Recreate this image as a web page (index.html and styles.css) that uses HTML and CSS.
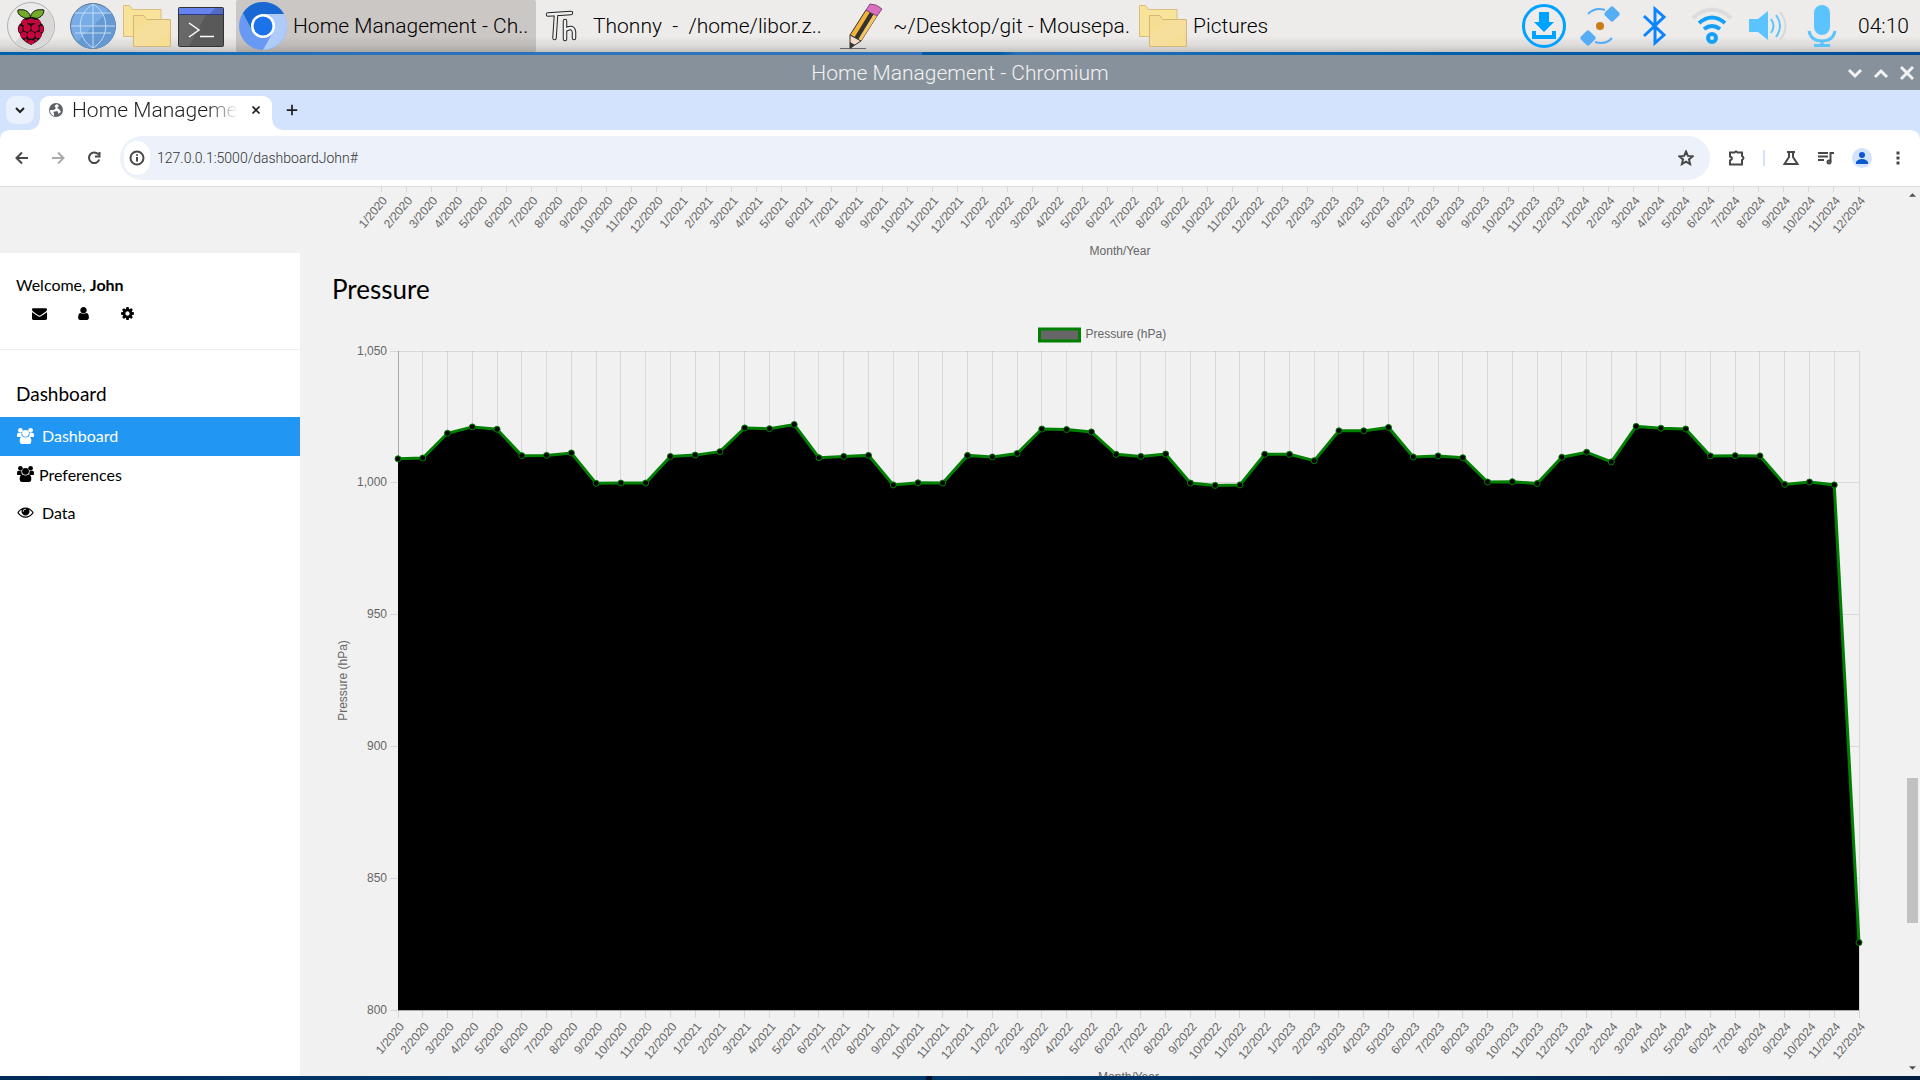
FILE: index.html
```html
<!DOCTYPE html>
<html lang="en">
<head>
<meta charset="utf-8">
<title>Home Management</title>
<link rel="stylesheet" href="styles.css">
</head>
<body>
<svg class="defs" aria-hidden="true">
  <symbol id="folder" viewBox="0 0 48 48">
    <path d="M.5 34.500V3.500h6l3 4h28.500v27z" fill="#f8e39b" stroke="#d9bd80"/>
    <path d="M10.500 44.500V13.500h10l3 4h24v27z" fill="#f6dd94" stroke="#d4b679"/>
    <path d="M11 44V32l22-14h14v12L24 44z" fill="#fff" opacity=".08"/>
  </symbol>
  <symbol id="users" viewBox="0 0 16 15">
    <circle cx="3.200" cy="2.200" r="2.200"/><circle cx="12.800" cy="2.200" r="2.200"/><circle cx="8" cy="5" r="3.200"/>
    <path d="M0 8V6.500Q0 4.500 1.500 4.500L4.200 5Q4 7 5 8.500H1.500Q0 8.500 0 8zM16 8V6.500Q16 4.500 14.500 4.500L11.800 5Q12 7 11 8.500h3.500Q16 8.500 16 8zM2.500 12.500Q2.500 8 5.300 8Q8 10 10.700 8Q13.500 8 13.500 12.500Q13.500 15 11.500 15h-7Q2.500 15 2.500 12.500z"/>
  </symbol>
</svg>
<div class="desktop">
  <header class="taskbar">
    <nav class="launchers" aria-label="Launchers">
      <button class="start" aria-label="Menu"><svg class="app-icon" viewBox="0 0 48 48">
        <circle cx="24" cy="24" r="23.500" fill="#ebebeb" stroke="#b0b0b0"/>
        <path d="M41 8A23 23 0 0 1 8 40z" fill="#d8d8d8"/>
        <path d="M23 17C13 16 10 11 11 8c5-1 11 0 12.500 7C25 8 31 7 37 8c0 5-4 9-12 9z" fill="#75a928" stroke="#111"/>
        <path d="M24 15c5 0 9 2 10 6 4 3 4 8 1 11-1 5-5 8-11 11-6-3-10-6-11-11-3-3-3-8 1-11 1-4 5-6 10-6z" fill="#111"/>
        <g fill="#c7053d"><ellipse cx="24" cy="19" rx="4" ry="2.500"/><circle cx="17.500" cy="20.500" r="3"/><circle cx="30.500" cy="20.500" r="3"/><circle cx="20" cy="26" r="3.700"/><circle cx="28" cy="26" r="3.700"/><ellipse cx="13.500" cy="27" rx="2" ry="3.500"/><ellipse cx="34.500" cy="27" rx="2" ry="3.500"/><circle cx="24" cy="33" r="3.700"/><circle cx="16.700" cy="33" r="3.200"/><circle cx="31.300" cy="33" r="3.200"/><ellipse cx="24" cy="40" rx="3.500" ry="2"/><circle cx="19" cy="38" r="1.500"/><circle cx="29" cy="38" r="1.500"/></g>
      </svg></button>
      <button aria-label="Web browser"><svg class="app-icon" viewBox="0 0 48 48">
        <circle cx="24" cy="24" r="22.500" fill="#78ace6" stroke="#56718f"/>
        <path d="M40 8A22 22 0 0 1 8 40z" fill="#6499d3"/>
        <path d="M24 2v44M2 24h44M6 11h36M6 31h36M24 2C7 12 7 36 24 46M24 2c17 10 17 34 0 44" fill="none" stroke="#c4dcf5"/>
      </svg></button>
      <button aria-label="File manager"><svg class="app-icon"><use href="#folder"/></svg></button>
      <button aria-label="Terminal"><svg class="app-icon" viewBox="0 0 48 48">
        <rect x="1.500" y="5.500" width="45" height="39" rx="1" fill="#595959" stroke="#333"/>
        <path d="M2 13h44V6H33L12 44H2z" fill="#686868"/><path d="M2 6h44v6H2z" fill="#6683ee"/><path d="M38 6h8v6H33z" fill="#536bc4"/><path d="M2 12.500h44" stroke="#293a88"/>
        <path d="m12 21 10 7-10 7M23 34.500h14" fill="none" stroke="#fff" stroke-width="1.500"/>
      </svg></button>
    </nav>
    <nav class="tasks" aria-label="Windows">
      <button class="task task-active"><svg class="app-icon" viewBox="0 0 48 48">
        <circle cx="24" cy="24" r="24" fill="#689af3"/>
        <path d="M4 11A24 24 0 0 1 45 12H24L13 28z" fill="#1967d2"/>
        <path d="M24 12h21A24 24 0 0 1 24 48L34 30z" fill="#aecbfa"/>
        <circle cx="24" cy="24" r="12" fill="#fff"/><circle cx="24" cy="24" r="9.500" fill="#1a73e8"/>
      </svg><span>Home Management - Ch..</span></button>
      <button class="task"><svg class="app-icon" viewBox="0 0 48 48">
        <path d="M9 12.500 32 11M17 13 15.500 36M26 19v18M26 28q8-5 9 2v6" fill="none" stroke="#222" stroke-width="4.500" stroke-linecap="round"/>
        <path d="M9 12.500 32 11M17 13 15.500 36M26 19v18M26 28q8-5 9 2v6" fill="none" stroke="#f0f0f0" stroke-width="2.500" stroke-linecap="round"/>
      </svg><span>Thonny&nbsp; -&nbsp; /home/libor.z..</span></button>
      <button class="task"><svg class="app-icon" viewBox="0 0 48 48">
        <path d="M1 46.500h26" stroke="#666"/>
        <path d="m11 33 16-25 11 6-16 25z" fill="#f5b335" stroke="#333"/>
        <path d="m15 36 16-26 4 2-16 26z" fill="#333"/><path d="m19 38 16-26 3 2-16 25z" fill="#f5c465"/>
        <path d="m27 8 4-6q7 0 12 5l-5 7z" fill="#d970bd" stroke="#884a79"/>
        <path d="m11 33 11 6-11 7z" fill="#f6dcc8" stroke="#333"/><path d="m11 40 5 3-5 4z" fill="#333"/>
      </svg><span>~/Desktop/git - Mousepa.</span></button>
      <button class="task"><svg class="app-icon"><use href="#folder"/></svg><span>Pictures</span></button>
    </nav>
    <div class="tray">
      <svg class="tray-icon" viewBox="0 0 44 44"><circle cx="22" cy="22" r="20.500" fill="none" stroke="#00a2ff" stroke-width="3"/><path d="M17 8h10v10h5L22 28 12 18h5zM10 27h4v4h16v-4h4v8H10z" fill="#00a2ff"/></svg>
      <svg class="tray-icon" viewBox="0 0 44 44"><g fill="#55aef5"><rect x="28" y="4" width="12" height="12" rx="2" transform="rotate(45 34 10)"/><rect x="4" y="28" width="12" height="12" rx="2" transform="rotate(45 10 34)"/></g><circle cx="22" cy="22" r="4" fill="#c97c18"/><path d="M10 10q7-7 17-4M17 38q11 3 17-4" fill="none" stroke="#55aef5" stroke-width="2"/></svg>
      <svg class="tray-icon" viewBox="0 0 44 44"><path d="m10 12 20 19-9 8V5l9 8-20 19" fill="none" stroke="#0a84ff" stroke-width="3"/></svg>
      <svg class="tray-icon" viewBox="0 0 44 44"><g fill="none" stroke="#12a0f8" stroke-width="4"><path d="M3 14Q22-3 41 14" stroke="#dcdcdc"/><path d="M9 19q13-11 26 0M14 25q8-6 16 0"/><circle cx="22" cy="34" r="4"/></g></svg>
      <svg class="tray-icon" viewBox="0 0 44 44"><path d="M3 15h9l10-8v29l-10-8H3z" fill="#5bc4ff"/><path d="M25 15q5 7 0 14M30 11q8 11 0 22" fill="none" stroke="#5bc4ff" stroke-width="2"/><path d="M34 8q11 14 0 28" fill="none" stroke="#d8d8d8" stroke-width="2"/></svg>
      <svg class="tray-icon" viewBox="0 0 44 44"><rect x="12" y="1" width="16" height="30" rx="8" fill="#5bc4ff"/><path d="M7 27q2 10 13 10t13-10M20 37v5M12 41.500h16" fill="none" stroke="#5bc4ff" stroke-width="3"/></svg>
      <time class="clock">04:10</time>
    </div>
  </header>
  <div class="wallpaper-top"></div>

  <div class="titlebar">
    <span class="title">Home Management - Chromium</span>
    <div class="window-buttons">
      <button aria-label="Minimize"><svg viewBox="0 0 16 16"><path d="m2 5 6 6 6-6"/></svg></button>
      <button aria-label="Maximize"><svg viewBox="0 0 16 16"><path d="m2 12 6-6 6 6"/></svg></button>
      <button aria-label="Close"><svg viewBox="0 0 16 16"><path d="m2 2 12 12M14 2 2 14"/></svg></button>
    </div>
  </div>

  <div class="tabstrip">
    <button class="tab-search" aria-label="Search tabs"><svg class="icon" viewBox="0 0 16 16"><path d="m4 6 4 4 4-4"/></svg></button>
    <div class="tab">
      <svg class="favicon" viewBox="0 0 16 16"><circle cx="8" cy="8" r="7" fill="#5f6368"/><path d="M9 2q-4 2-1 4l-2 2H2q0 4 4 6V11l-1-1 4-1q2 1 1 3l3-2-2-3-2-1 2-2z" fill="#fff"/></svg>
      <span class="tab-title">Home Management</span>
      <button aria-label="Close tab"><svg class="icon" viewBox="0 0 16 16"><path d="m4 4 8 8M12 4l-8 8"/></svg></button>
    </div>
    <button class="new-tab" aria-label="New tab"><svg class="icon" viewBox="0 0 16 16"><path d="M8 2v12M2 8h12"/></svg></button>
  </div>

  <div class="toolbar">
    <div class="nav-buttons">
      <button aria-label="Back"><svg class="icon" viewBox="0 0 16 16"><path d="M14 8H3M8 2.500 2.500 8 8 13.500"/></svg></button>
      <button aria-label="Forward" class="dim"><svg class="icon" viewBox="0 0 16 16"><path d="M2 8h11M8 2.500 13.500 8 8 13.500"/></svg></button>
      <button aria-label="Reload"><svg class="icon" viewBox="0 0 16 16"><path d="M12.500 4.500a5.300 5.300 0 1 0 .8 5M13.500 2v4.500H9"/></svg></button>
    </div>
    <div class="omnibox">
      <button class="site-info" aria-label="Site information"><svg class="icon" viewBox="0 0 16 16"><circle cx="8" cy="8" r="6.500"/><path d="M8 7v4.500M8 4.200v1.600"/></svg></button>
      <input class="address" type="text" aria-label="Address" value="127.0.0.1:5000/dashboardJohn#">
      <button aria-label="Bookmark"><svg class="icon" viewBox="0 0 16 16"><path d="m8 1.500 1.900 4.400 4.700.4-3.600 3.100 1.100 4.700L8 11.700l-4.100 2.400L5 9.400 1.400 6.300l4.700-.4z"/></svg></button>
    </div>
    <div class="actions">
      <button aria-label="Extensions"><svg class="icon" viewBox="0 0 16 16"><path d="M1 2.500h4.500q1.500-2 3 0H13V6q3 2 0 4v4.500H1v-4q4-2 0-4z"/></svg></button>
      <span class="divider"></span>
      <button aria-label="Labs"><svg class="icon" viewBox="0 0 16 16"><path d="M4 2h8M6 2v5l-4.500 7h13L10 7V2"/></svg></button>
      <button aria-label="Media"><svg class="icon" viewBox="0 0 16 16"><path d="M0 3h10M0 6.500h10M0 10h6M12.500 12V3H16"/><circle cx="11" cy="12" r="1.500"/></svg></button>
      <button aria-label="Profile" class="profile"><svg viewBox="0 0 20 20"><circle cx="10" cy="10" r="10" fill="#d3e3fd"/><circle cx="10" cy="7" r="3" fill="#0b57d0"/><path d="M4 16v-2q2-3 6-3t6 3v2z" fill="#0b57d0"/></svg></button>
      <button aria-label="Menu"><svg class="icon" viewBox="0 0 16 16"><path d="M8 1.500v3M8 6.500v3M8 11.500v3" stroke-width="3"/></svg></button>
    </div>
  </div>

  <div class="viewport">
    <aside class="sidebar">
      <div class="welcome">
        <p>Welcome, <strong>John</strong></p>
        <div class="quick">
          <a href="#" aria-label="Messages"><svg class="fa" viewBox="0 0 1792 1792"><path d="M1792 710v794q0 66-47 113t-113 47h-1472q-66 0-113-47t-47-113v-794q44 49 101 87 362 246 497 345 57 42 92.500 65.500t94.500 48 110 24.500h2q51 0 110-24.500t94.500-48 92.500-65.500q170-123 498-345 57-39 100-87zm0-294q0 79-49 151t-122 123q-376 261-468 325-10 7-42.500 31t-54 38.500-52 32.500-57.500 27-50 9h-2q-23 0-50-9t-57.500-27-52-32.500-54-38.500-42.500-31q-91-64-262-182.500t-205-142.500q-62-42-117-115.500t-55-136.500q0-78 41.500-130t118.500-52h1472q65 0 112.500 47t47.500 113z"/></svg></a>
          <a href="#" aria-label="Account"><svg class="fa" viewBox="0 0 1792 1792"><path d="M1536 1399q0 109-62.500 187t-150.500 78h-854q-88 0-150.500-78t-62.500-187q0-85 8.500-160.500t31.500-152 58.500-131 94-89 134.500-34.500q131 128 313 128t313-128q76 0 134.500 34.500t94 89 58.500 131 31.500 152 8.500 160.500zm-256-887q0 159-112.500 271.500t-271.500 112.500-271.500-112.500-112.500-271.500 112.500-271.500 271.500-112.500 271.500 112.500 112.500 271.500z"/></svg></a>
          <a href="#" aria-label="Settings"><svg class="fa" viewBox="0 0 1792 1792"><path d="M1152 896q0-106-75-181t-181-75-181 75-75 181 75 181 181 75 181-75 75-181zm512-109v222q0 12-8 23t-20 13l-185 28q-19 54-39 91 35 50 107 138 10 12 10 25t-9 23q-27 37-99 108t-94 71q-12 0-26-9l-138-108q-44 23-91 38-16 136-29 186-7 28-36 28h-222q-14 0-24.500-8.500t-11.500-21.500l-28-184q-49-16-90-37l-141 107q-10 9-25 9-14 0-25-11-126-114-165-168-7-10-7-23 0-12 8-23 15-21 51-66.500t54-70.500q-27-50-41-99l-183-27q-13-2-21-12.500t-8-23.500v-222q0-12 8-23t19-13l186-28q14-46 39-92-40-57-107-138-10-12-10-24 0-10 9-23 26-36 98.500-107.500t94.500-71.500q13 0 26 10l138 107q44-23 91-38 16-136 29-186 7-28 36-28h222q14 0 24.500 8.500t11.500 21.500l28 184q49 16 90 37l142-107q9-9 24-9 13 0 25 10 129 119 165 170 7 8 7 22 0 12-8 23-15 21-51 66.500t-54 70.500q26 50 41 98l183 28q13 2 21 12.500t8 23.500z"/></svg></a>
        </div>
      </div>
      <h2>Dashboard</h2>
      <nav class="menu">
        <a href="#" class="active"><svg class="fa-wide"><use href="#users"/></svg>Dashboard</a>
        <a href="#" class="tight"><svg class="fa-wide"><use href="#users"/></svg>Preferences</a>
        <a href="#"><svg class="fa-wide" viewBox="0 0 1792 1792"><path d="M1664 960q-152-236-381-353 61 104 61 225 0 185-131.500 316.500t-316.500 131.500-316.500-131.500-131.500-316.500q0-121 61-225-229 117-381 353 133 205 333.500 326.500t434.500 121.500 434.500-121.500 333.500-326.500zm-720-384q0-20-14-34t-34-14q-125 0-214.500 89.500t-89.500 214.500q0 20 14 34t34 14 34-14 14-34q0-86 61-147t147-61q20 0 34-14t14-34zm848 384q0 34-20 69-140 230-376.500 368.500t-499.500 138.500-499.500-139-376.500-368q-20-35-20-69t20-69q140-229 376.500-368t499.500-139 499.500 139 376.500 368q20 35 20 69z"/></svg>Data</a>
      </nav>
    </aside>
    <main class="content">
      <svg class="axis-tail" id="previous-chart"></svg>
      <h1>Pressure</h1>
      <svg class="chart" id="pressure-chart" role="img" aria-label="Pressure (hPa) by month"></svg>
    </main>
    <div class="scrollbar">
      <svg viewBox="0 0 8 4"><path d="M4 0 8 4H0z"/></svg>
      <div class="track"><div class="thumb"></div></div>
      <svg viewBox="0 0 8 4"><path d="M0 0h8L4 4z"/></svg>
    </div>
  </div>
  <div class="wallpaper-bottom"></div>
</div>
<script src="chart.js"></script>
</body>
</html>
```
FILE: styles.css
```css
* { box-sizing: border-box; }
body { margin: 0; }
button { border: 0; padding: 0; background: none; font: inherit; color: inherit; display: flex; align-items: center; justify-content: center; }
.defs { display: none; }
.desktop { height: 100vh; display: flex; flex-direction: column; font-family: Roboto, sans-serif; font-weight: 300; overflow: hidden; }

.taskbar { height: 52px; flex: none; display: flex; background: linear-gradient(#edeceb 0, #edeceb 36px, #dcdad9 46px, #c4c2c0 52px); font-size: 21px; color: #000; }
.launchers { display: flex; gap: 6px; width: 236px; padding-left: 7px; flex: none; align-items: center; }
.start { margin-right: 8px; }
.app-icon { width: 48px; height: 48px; flex: none; overflow: visible; }
.tasks { display: flex; flex: 1; min-width: 0; }
.task { width: 300px; padding: 0 3px; gap: 6px; justify-content: flex-start; white-space: nowrap; }
.task-active { background: linear-gradient(#cbc7c4 36px, #bcb8b5 46px, #aaa6a3); border-radius: 2px; }
.tray { display: flex; align-items: center; gap: 12px; padding-right: 11px; }
.tray-icon { width: 44px; height: 44px; }

.wallpaper-top { height: 3px; flex: none; background: linear-gradient(90deg, #0060aa, #2a72bc 20%, #2e73bb 48%, #005ba0 48%, #005ba0 52%, #2870b8 53%, #0060ab 75%, #004b94); }
.wallpaper-bottom { height: 4px; flex: none; background: linear-gradient(90deg, #002a58, #003a6d 25%, #003a6b 926px, #00142c 926px, #00142c 932px, #003a6b 932px, #002c5a 80%, #001c40); }

.titlebar { height: 35px; flex: none; display: grid; grid-template-columns: 80px 1fr 80px; align-items: center; background: #87919b; color: #f2f2f2; font-size: 21px; }
.title { grid-column: 2; text-align: center; }
.window-buttons { display: flex; gap: 10px; justify-content: flex-end; padding-right: 5px; }
.window-buttons svg { width: 16px; height: 16px; fill: none; stroke: #f2f2f2; stroke-width: 3; }

.icon { width: 16px; height: 16px; fill: none; stroke: currentColor; stroke-width: 2; flex: none; }
.tabstrip { height: 40px; flex: none; display: flex; align-items: flex-end; background: #d3e3fd; padding-left: 6px; color: #1f1f1f; }
.tab-search { width: 28px; height: 28px; background: #e9f1fe; border-radius: 9px; margin: 0 6px 6px 0; }
.tab { width: 232px; height: 34px; display: flex; align-items: center; background: #fff; border-radius: 9px 9px 0 0; padding: 0 9px 6px 8px; position: relative; }
.tab::before, .tab::after { content: ""; position: absolute; bottom: 0; width: 10px; height: 10px; }
.tab::before { left: -10px; background: radial-gradient(circle at 0 0, transparent 9px, #fff 10px); }
.tab::after { right: -10px; background: radial-gradient(circle at 100% 0, transparent 9px, #fff 10px); }
.favicon { width: 16px; height: 16px; margin-right: 8px; flex: none; }
.tab-title { flex: 1; font-size: 21px; line-height: 22px; overflow: hidden; white-space: nowrap; mask-image: linear-gradient(90deg, #000 80%, transparent 98%); }
.tab .icon { width: 14px; height: 14px; margin-left: 8px; }
.new-tab { width: 40px; height: 28px; margin: 0 0 6px; }
.new-tab .icon { width: 14px; height: 14px; }

.toolbar { height: 57px; flex: none; display: flex; align-items: center; background: #fff; border-bottom: 1px solid #dcdcdc; padding-left: 14px; position: relative; color: #474747; }
.toolbar::before, .toolbar::after { content: ""; position: absolute; top: 0; width: 8px; height: 8px; }
.toolbar::before { left: 0; background: radial-gradient(circle at 100% 100%, #fff 7px, #d3e3fd 8px); }
.toolbar::after { right: 0; background: radial-gradient(circle at 0 100%, #fff 7px, #d3e3fd 8px); }
.nav-buttons { display: flex; gap: 20px; width: 106px; }
.dim { color: #aaa; }
.omnibox { flex: 1; height: 44px; display: flex; align-items: center; background: #ecf1fa; border-radius: 22px; padding: 0 16px 0 4px; }
.site-info { width: 26px; height: 34px; border-radius: 13px; background: #fff; }
.address { flex: 1; border: 0; background: none; font: inherit; font-size: 14px; color: #333; padding: 0 7px; outline: none; }
.actions { width: 210px; display: flex; align-items: center; justify-content: space-between; padding: 0 14px 0 19px; }
.divider { width: 2px; height: 16px; background: #d3e3fd; }
.profile svg { width: 20px; height: 20px; }

.viewport { flex: 1; min-height: 0; display: flex; overflow: hidden; background: #f1f1f1; color: #000; font-family: Lato, sans-serif; font-weight: 400; font-size: 16px; }
.sidebar { width: 300px; flex: none; margin-top: 66px; background: #fff; }
.welcome { height: 97px; padding: 21px 16px 0; border-bottom: 1px solid #eee; }
.welcome p { margin: 0; line-height: 22px; }
.quick { display: flex; gap: 29px; padding: 10px 16px 0; }
.fa { width: 15px; height: 15px; display: block; }
.sidebar h2 { margin: 0; padding: 30px 16px 0; height: 67px; font-size: 19px; font-weight: 400; line-height: 27px; }
.menu a { display: flex; align-items: center; gap: 8px; height: 38px; padding: 0 17px 2px; color: #000; text-decoration: none; }
.menu a.tight { gap: 5px; }
.menu a.active { height: 39px; background: #2196f3; color: #fff; }
.fa-wide { width: 17px; height: 16px; fill: currentColor; }
.content { flex: 1; min-width: 0; padding: 0 32px; }
.content h1 { margin: 8px 0 12px; font-size: 26px; font-weight: 400; line-height: 36px; }
.axis-tail, .chart { display: block; width: 100%; font-family: "Liberation Sans", Arial, sans-serif; font-size: 12px; fill: #666; }
.axis-tail { height: 76px; }
.grid { stroke: rgba(0, 0, 0, .1); }
.axis { stroke: rgba(0, 0, 0, .2); }
.area { fill: #000; }
.line { fill: none; stroke: green; stroke-width: 3; }
.point { fill: #000; stroke: green; }
.legend-box { fill: #666; stroke: green; stroke-width: 3; }
.scrollbar { width: 15px; display: flex; flex-direction: column; align-items: center; padding: 6px 0; }
.scrollbar svg { width: 7px; height: 4px; fill: #505050; }
.track { flex: 1; width: 11px; display: flex; flex-direction: column; }
.track::before { content: ""; flex: 581; }
.track::after { content: ""; flex: 143; }
.thumb { flex: 145; background: #c1c1c1; }
```
FILE: chart.js
```js
const values = [
  1009.1, 1009.4, 1018.8, 1021.2, 1020.3, 1010.3, 1010.4, 1011.3, 999.8, 999.9, 999.9, 1010.0,
  1010.5, 1011.8, 1020.8, 1020.5, 1022.1, 1009.5, 1010.0, 1010.4, 999.2, 1000.0, 999.9, 1010.4,
  1009.8, 1011.1, 1020.4, 1020.2, 1019.3, 1010.8, 1010.0, 1010.9, 999.9, 999.0, 999.2, 1010.8,
  1010.8, 1008.4, 1019.7, 1019.7, 1021.0, 1009.8, 1010.2, 1009.5, 1000.3, 1000.4, 999.7, 1009.7,
  1011.6, 1007.9, 1021.4, 1020.7, 1020.4, 1010.2, 1010.3, 1010.2, 999.4, 1000.3, 999.2, 825.6
];
const labels = values.map((_, i) => `${i % 12 + 1}/${2020 + Math.floor(i / 12)}`);

function add(parent, tag, attrs, text) {
  const el = document.createElementNS('http://www.w3.org/2000/svg', tag);
  for (const key in attrs) el.setAttribute(key, attrs[key]);
  if (text) el.textContent = text;
  parent.appendChild(el);
}

const crisp = n => Math.floor(n) + 0.5;

function monthAxis(svg, left, right, y, tick, top) {
  const step = (right - left) / (labels.length - 1);
  labels.forEach((label, i) => {
    const x = left + i * step;
    add(svg, 'line', { class: 'grid', x1: crisp(x), x2: crisp(x), y1: top, y2: y + tick });
    add(svg, 'text', { 'text-anchor': 'end', transform: `translate(${x} ${y + tick + 3}) rotate(-50)`, dy: 9 }, label);
  });
  add(svg, 'text', { 'text-anchor': 'middle', x: (left + right) / 2, y: y + tick + 63 }, 'Month/Year');
}

function draw() {
  const tail = document.getElementById('previous-chart');
  const svg = document.getElementById('pressure-chart');
  tail.replaceChildren();
  svg.replaceChildren();
  const width = svg.getBoundingClientRect().width;
  const height = Math.round(width / 2);
  svg.setAttribute('height', height);
  const right = width - 14;
  monthAxis(tail, 49, right, -3, 8, -3);

  const left = 66, top = 32, bottom = height - 80;
  const yOf = v => bottom - (v - 800) / 250 * (bottom - top);
  const xOf = i => left + i * (right - left) / (values.length - 1);
  const mid = (left + right) / 2;
  add(svg, 'rect', { class: 'legend-box', x: mid - 89, y: 10, width: 40, height: 12 });
  add(svg, 'text', { x: mid - 43, y: 19 }, 'Pressure (hPa)');
  add(svg, 'text', { 'text-anchor': 'middle', transform: `translate(15 ${(top + bottom) / 2}) rotate(-90)` }, 'Pressure (hPa)');
  for (let v = 800; v <= 1050; v += 50) {
    const y = crisp(yOf(v));
    add(svg, 'line', { class: 'grid', x1: left - 8, x2: right, y1: y, y2: y });
    add(svg, 'text', { 'text-anchor': 'end', x: left - 11, y: y + 3 }, v.toLocaleString('en-US'));
  }
  monthAxis(svg, left, right, bottom, 8, top);
  add(svg, 'path', { class: 'axis', fill: 'none', d: `M${crisp(left)} ${top}V${crisp(bottom)}H${right}` });
  const points = values.map((v, i) => `${xOf(i)},${yOf(v)}`).join(' ');
  add(svg, 'polygon', { class: 'area', points: `${left},${bottom} ${points} ${right},${bottom}` });
  add(svg, 'polyline', { class: 'line', points });
  values.forEach((v, i) => add(svg, 'circle', { class: 'point', cx: xOf(i), cy: yOf(v), r: 3 }));
}

draw();
window.addEventListener('resize', draw);
```
